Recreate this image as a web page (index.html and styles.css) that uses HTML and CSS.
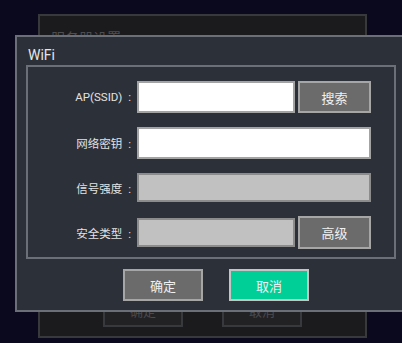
FILE: index.html
```html
<!DOCTYPE html>
<html lang="zh-CN">
<head>
    <meta charset="UTF-8">
    <meta name="viewport" content="width=device-width, initial-scale=1.0">
    <title>WiFi</title>
    <link rel="stylesheet" href="styles.css">
</head>
<body>
    <div class="stage">
        <div class="dialog-back">
            <div class="back-title">服务器设置</div>
            <div class="back-actions">
                <div class="back-btn">确定</div>
                <div class="back-btn">取消</div>
            </div>
        </div>

        <div class="dialog">
            <div class="dialog-title">WiFi</div>
            <div class="fieldset">
                <div class="label">AP(SSID) :</div>
                <div class="input"></div>
                <div class="btn">搜索</div>

                <div class="label">网络密钥 :</div>
                <div class="input wide"></div>

                <div class="label">信号强度 :</div>
                <div class="input wide disabled"></div>

                <div class="label">安全类型 :</div>
                <div class="input disabled"></div>
                <div class="btn">高级</div>
            </div>
            <div class="actions">
                <div class="btn action">确定</div>
                <div class="btn action primary">取消</div>
            </div>
        </div>
    </div>
</body>
</html>
```

FILE: styles.css
```css
body, html {
    margin: 0;
    padding: 0;
    height: 100%;
    background: #0a091d;
    font-family: Roboto, "Noto Sans CJK SC", sans-serif;
}

.stage {
    position: relative;
    width: 402px;
    height: 343px;
    overflow: hidden;
}

/* window behind */
.dialog-back {
    position: absolute;
    left: 38px;
    top: 14px;
    width: 325px;
    height: 320px;
    background: #1b1b1d;
    border: 2px solid #38393c;
    display: flex;
    flex-direction: column;
    justify-content: space-between;
}

.back-title {
    padding: 11px 0 0 11px;
    font-size: 14px;
    color: #4d4d50;
}

.back-actions {
    display: flex;
    gap: 39px;
    padding: 0 0 9px 63px;
}

.back-btn {
    width: 76px;
    height: 30px;
    border: 2px solid #38393c;
    background: #222225;
    color: #4a4a4d;
    font-size: 13px;
    display: flex;
    align-items: center;
    justify-content: center;
}

/* active window */
.dialog {
    position: absolute;
    left: 15px;
    top: 35px;
    width: 370px;
    height: 273px;
    background: #2c3039;
    border: 2px solid #6b6f77;
    padding: 0 8px 0 9px;
}

.dialog-title {
    height: 19px;
    line-height: 19px;
    padding: 9px 0 0 2px;
    font-size: 14px;
    color: #e6e6e6;
}

.fieldset {
    border: 2px solid #6b6f77;
    height: 176px;
    padding: 14px 6px 0 0;
    display: grid;
    grid-template-columns: 106px 158px 73px;
    grid-template-rows: 32px 32px 29px 33px;
    column-gap: 3px;
    row-gap: 14px;
    align-items: center;
}

.label {
    text-align: right;
    padding-right: 3px;
    font-size: 11.5px;
    word-spacing: 3px;
    color: #e2e2e2;
}

.input {
    height: 28px;
    background: #ffffff;
    border: 2px solid #a3a3a3;
}

.input.wide {
    grid-column: 2 / 4;
}

.input.disabled {
    height: 25px;
    background: #c1c1c1;
    border-color: #8c8c8c;
}

.btn {
    box-sizing: border-box;
    height: 32px;
    background: #6b6b6b;
    border: 2px solid #a6a6a6;
    color: #f0f0f0;
    font-size: 13px;
    display: flex;
    align-items: center;
    justify-content: center;
}

.fieldset .btn:last-child {
    height: 33px;
}

.actions {
    display: flex;
    gap: 26px;
    padding: 10px 0 0 97px;
}

.btn.action {
    width: 80px;
}

.btn.primary {
    background: #00cf98;
    border-color: #c4c4c4;
}
```
